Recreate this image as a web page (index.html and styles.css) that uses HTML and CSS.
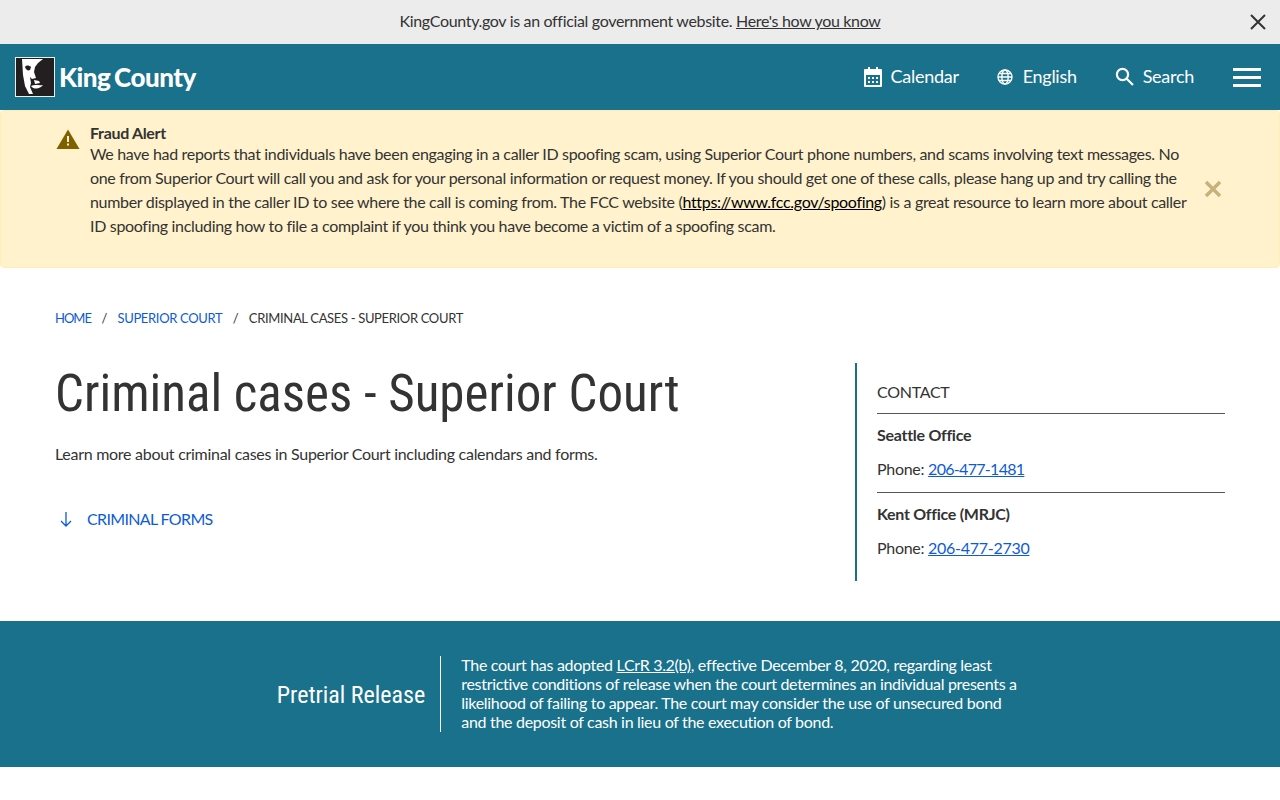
FILE: index.html
```html
<!DOCTYPE html>
<html lang="en">
<head>
    <meta charset="UTF-8">
    <title>Criminal cases - Superior Court - King County</title>
    <link rel="stylesheet" href="styles.css">
</head>
<body>
    <!-- Official website bar -->
    <div class="gov-bar">
        <span>KingCounty.gov is an official government website. <a href="#">Here's how you know</a></span>
        <svg class="gov-close" width="16" height="16" viewBox="0 0 16 16"><path d="M1 1 15 15M15 1 1 15" stroke="#333" stroke-width="2" fill="none"/></svg>
    </div>

    <header class="site-header">
        <a class="logo" href="#">
            <svg class="logo-mark" width="40" height="40" viewBox="0 0 40 40">
                <rect x="0.5" y="0.5" width="39" height="39" fill="#231f20" stroke="#e6f1f4"/>
                <path d="M7 2H28L23 6 20 10 19 15 21 21 17 22 15 20 16 26 15 30 18 37H14L10 29 8 18z" fill="#fff"/>
                <path d="M10 10C11 8 14 8 16 10L15 13C13 14 11 13 10 10z" fill="#231f20"/>
                <path d="M19 23 24 24 25 26 20 27zM16 29C20 27 24 29 28 28 25 32 19 33 16 29z" fill="#fff"/>
            </svg>
            <span class="logo-text">King County</span>
        </a>
        <nav class="top-nav">
            <a href="#">
                <svg width="20" height="22" viewBox="0 0 20 22"><path d="M2 3h3V1h2v2h6V1h2v2h3a1 1 0 0 1 1 1v16a1 1 0 0 1-1 1H2a1 1 0 0 1-1-1V4a1 1 0 0 1 1-1zM3 9v10h14V9z" fill="#fff" fill-rule="evenodd"/><path d="M5 11h2v2H5zM9 11h2v2H9zM13 11h2v2h-2zM5 15h2v2H5zM9 15h2v2H9zM13 15h2v2h-2z" fill="#fff"/></svg>
                <span>Calendar</span>
            </a>
            <a class="nav-globe" href="#">
                <svg width="16" height="16" viewBox="0 0 16 16" fill="none" stroke="#fff" stroke-width="1.4"><circle cx="8" cy="8" r="7"/><ellipse cx="8" cy="8" rx="3.2" ry="7"/><path d="M1 8h14M2 4.5h12M2 11.5h12"/></svg>
                <span>English</span>
            </a>
            <a class="nav-search" href="#">
                <svg width="19" height="19" viewBox="0 0 19 19" fill="none" stroke="#fff" stroke-width="2.2"><circle cx="7.5" cy="7.5" r="5.6"/><path d="M11.5 11.5 18 18"/></svg>
                <span>Search</span>
            </a>
            <div class="menu-btn"><span></span><span></span><span></span></div>
        </nav>
    </header>

    <div class="alert">
        <svg class="alert-icon" width="24" height="20" viewBox="0 0 24 20"><path d="M12 0.5 23.5 20H0.5z" fill="#7f6000"/><path d="M11 7h2v6h-2zM11 14.5h2v2h-2z" fill="#fff2cc"/></svg>
        <div class="alert-body">
            <strong>Fraud Alert</strong>
            <p>We have had reports that individuals have been engaging in a caller ID spoofing scam, using Superior Court phone numbers, and scams involving text messages. No one from Superior Court will call you and ask for your personal information or request money. If you should get one of these calls, please hang up and try calling the number displayed in the caller ID to see where the call is coming from. The FCC website (<a href="#">https://www.fcc.gov/spoofing</a>) is a great resource to learn more about caller ID spoofing including how to file a complaint if you think you have become a victim of a spoofing scam.</p>
        </div>
        <svg class="alert-close" width="18" height="18" viewBox="0 0 18 18"><path d="M2 2 16 16M16 2 2 16" stroke="#c4b27a" stroke-width="3.4" fill="none"/></svg>
    </div>

    <ol class="breadcrumb">
        <li class="crumb-home"><a href="#">HOME</a></li>
        <li class="sep">/</li>
        <li><a href="#">SUPERIOR COURT</a></li>
        <li class="sep">/</li>
        <li>CRIMINAL CASES - SUPERIOR COURT</li>
    </ol>

    <main class="content">
        <div class="main-col">
            <h1>Criminal cases - Superior Court</h1>
            <p class="lead">Learn more about criminal cases in Superior Court including calendars and forms.</p>
            <a class="jump" href="#">
                <svg width="12" height="16" viewBox="0 0 12 16" fill="none" stroke="#0d5bd7" stroke-width="1.3"><path d="M6 1v14M1 10l5 5 5-5"/></svg>
                CRIMINAL FORMS
            </a>
        </div>
        <aside class="contact">
            <h2>CONTACT</h2>
            <div class="office">
                <strong>Seattle Office</strong>
                <p>Phone: <a class="tel-short" href="#">206-477-1481</a></p>
            </div>
            <div class="office">
                <strong>Kent Office (MRJC)</strong>
                <p>Phone: <a href="#">206-477-2730</a></p>
            </div>
        </aside>
    </main>

    <section class="band">
        <h3>Pretrial Release</h3>
        <div class="band-text">
            <p>The court has adopted <a href="#">LCrR 3.2(b)</a>, effective December 8, 2020, regarding least restrictive conditions of release when the court determines an individual presents a likelihood of failing to appear. The court may consider the use of unsecured bond and the deposit of cash in lieu of the execution of bond.</p>
        </div>
    </section>
</body>
</html>
```

FILE: styles.css
```css
/* General page styling */
body {
    margin: 0;
    font-family: "Lato", "Open Sans", sans-serif;
    font-size: 16px;
    letter-spacing: -0.28px;
    color: #333;
    background-color: #fff;
}

a {
    color: #0d5bd7;
}

/* Official website bar */
.gov-bar {
    height: 40px;
    padding-bottom: 4px;
    background-color: #ececec;
    display: flex;
    justify-content: center;
    align-items: center;
    letter-spacing: -0.33px;
    position: relative;
}

.gov-bar a {
    color: #333;
}

.gov-close {
    position: absolute;
    top: 14px;
    right: 14px;
}

/* Header */
.site-header {
    height: 66px;
    background-color: #19718b;
    display: flex;
    justify-content: space-between;
    align-items: center;
    padding: 0 19px 0 15px;
}

.logo {
    display: flex;
    align-items: center;
    gap: 4px;
    color: #fff;
    text-decoration: none;
}

.logo-text {
    font-size: 26px;
    font-weight: 900;
    letter-spacing: -0.5px;
    word-spacing: -2px;
}

.top-nav {
    display: flex;
    align-items: center;
    gap: 38px;
}

.top-nav a {
    display: flex;
    align-items: center;
    gap: 8px;
    color: #fff;
    text-decoration: none;
    font-size: 18px;
    padding-bottom: 1px;
}

.top-nav a span {
    padding-bottom: 2px;
}

.nav-globe svg {
    margin-right: 2px;
}

.nav-search svg {
    margin-right: 1px;
}

.menu-btn {
    display: flex;
    flex-direction: column;
    gap: 5px;
    width: 28px;
    margin-left: 1px;
}

.menu-btn span {
    height: 3px;
    background-color: #fff;
}

/* Alert */
.alert {
    height: 156px;
    background-color: #fff2cc;
    border: 1px solid #ffeeba;
    border-radius: 4px;
    display: flex;
    padding: 0 55px;
    position: relative;
}

.alert-icon {
    flex: none;
    margin-top: 18px;
    margin-right: 10px;
}

.alert-body {
    padding-top: 12px;
    width: 1105px;
    flex: none;
    letter-spacing: -0.32px;
}

.alert-body strong {
    display: block;
    line-height: 19px;
}

.alert-body p {
    margin: 0;
    line-height: 24px;
}

.alert-body a {
    color: #000;
}

.alert-close {
    position: absolute;
    top: 69px;
    right: 57px;
}

/* Breadcrumbs */
.breadcrumb {
    list-style: none;
    margin: 0;
    padding: 42px 55px 0;
    display: flex;
    gap: 10.5px;
    font-size: 13px;
    letter-spacing: -0.34px;
    line-height: 16px;
}

.breadcrumb a {
    text-decoration: none;
}

.crumb-home {
    letter-spacing: -1px;
}

/* Main content */
.content {
    display: flex;
    justify-content: space-between;
    padding: 37px 55px 40px;
}

.main-col {
    width: 780px;
}

h1 {
    margin: 1px 0 0;
    font-family: "Roboto", sans-serif;
    font-stretch: 75%;
    font-weight: 400;
    font-size: 51px;
    letter-spacing: 0;
    line-height: 60px;
}

.lead {
    margin: 18px 0 0;
    line-height: 24px;
}

.jump {
    display: flex;
    align-items: center;
    gap: 15px;
    margin: 41px 0 0 5px;
    text-decoration: none;
    letter-spacing: -0.65px;
    line-height: 24px;
}

.contact {
    width: 348px;
    height: 218px;
    border-left: 2px solid #19718b;
    padding-left: 20px;
}

.contact h2 {
    margin: 0;
    padding: 18px 0 10px;
    font-size: 16px;
    font-weight: 400;
    line-height: 22px;
    border-bottom: 1px solid #555;
}

.office {
    padding: 10px 0 12px;
    line-height: 22px;
}

.office + .office {
    border-top: 1px solid #555;
}

.office p {
    margin: 12px 0 0;
}

.tel-short {
    letter-spacing: -0.7px;
}

/* Pretrial band */
.band {
    height: 146px;
    padding-left: 18px;
    background-color: #19718b;
    color: #fff;
    display: flex;
    justify-content: center;
    align-items: center;
}

.band h3 {
    margin: 0;
    font-family: "Roboto", sans-serif;
    font-stretch: 75%;
    font-weight: 400;
    font-size: 24px;
    letter-spacing: 0;
    padding: 2px 15px 0 0;
}

.band-text {
    width: 560px;
    height: 76px;
    padding-left: 20px;
    border-left: 1px solid #fff;
}

.band-text p {
    margin: -1px 0 0;
    letter-spacing: -0.3px;
    line-height: 19px;
}

.band a {
    color: #fff;
}
```
